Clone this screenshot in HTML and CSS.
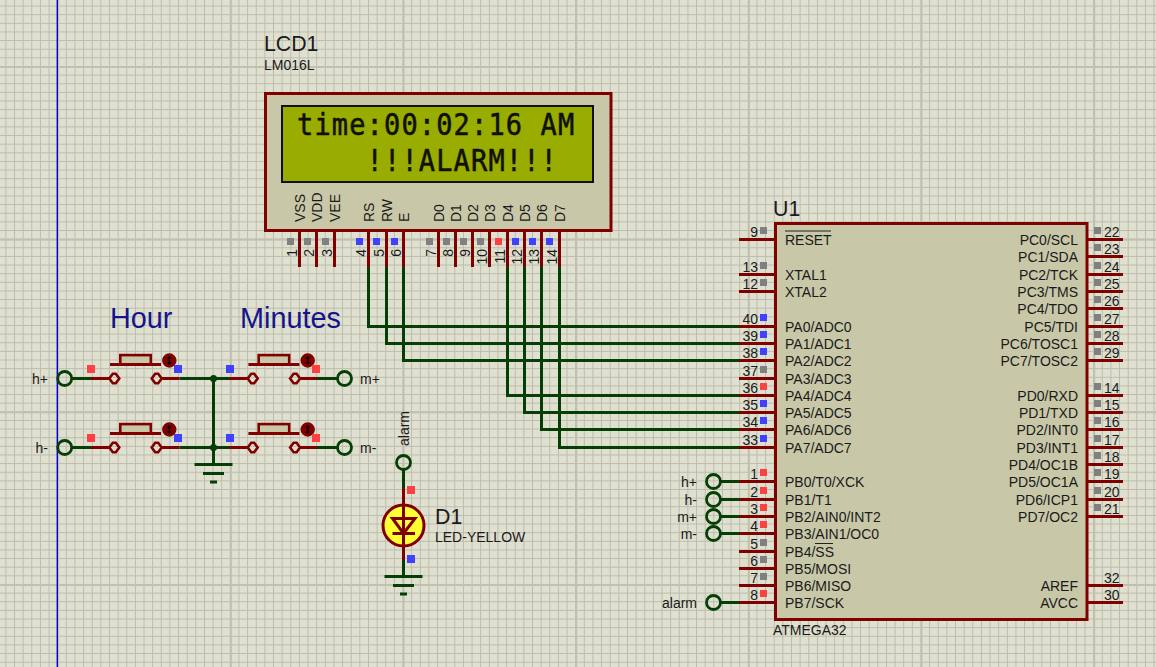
FILE: index.html
```html
<!DOCTYPE html>
<html lang="en">
<head>
<meta charset="utf-8">
<title>ATMEGA32 LCD alarm clock schematic</title>
<link rel="stylesheet" href="styles.css">
</head>
<body>
<svg class="sheet" width="1156" height="667" viewBox="0 0 1156 667" xmlns="http://www.w3.org/2000/svg">
  <defs>
    <pattern id="minor" patternUnits="userSpaceOnUse" x="57.2" y="66" width="8.633" height="8.633">
      <path class="grid-minor" d="M.5 0V8.633M0 .5H8.633"/>
    </pattern>
    <pattern id="major" patternUnits="userSpaceOnUse" x="57.2" y="66" width="172.67" height="172.67">
      <path class="grid-major" d="M1 0V172.67M0 1H172.67"/>
    </pattern>
    <g id="button">
      <path class="contact" d="M-5 0L-1.5-4.8H1.5L5 0L1.5 4.8H-1.5ZM37.4 0L40.9-4.8H43.9L47.4 0L43.9 4.8H40.9Z"/>
      <rect class="button-cap" x="6" y="-23.4" width="30.5" height="9.4"/>
      <path class="pin" d="M-4.3-14H46.7"/>
      <circle class="dial" cx="55" cy="-18" r="6.2"/>
      <path class="dial-mark" d="M55-21.5V-14.5M53.5-20L55-21.5L56.5-20M53.5-16L55-14.5L56.5-16"/>
    </g>
    <g id="earth">
      <path class="wire" d="M-19 0H19M-10.5 9H10.5M-3.5 17.5H3.5"/>
    </g>
  </defs>

  <rect width="1156" height="667" class="paper"/>
  <rect width="1156" height="667" fill="url(#minor)"/>
  <rect width="1156" height="667" fill="url(#major)"/>
  <path class="origin" d="M57.3 0V667"/>

  <!-- Wires -->
  <path class="wire" d="M368.5 267V326.5H739M386.5 267V343.5H739M403.5 267V360.5H739M507.5 267V395.5H739M524.5 267V412.5H739M541.5 267V429.5H739M559.5 267V447.5H739"/>
  <path class="wire" d="M72 378.5H91M179.5 378.5H229M317 378.5H337M72 447.5H91M179.5 447.5H229M317 447.5H337M213.5 378.5V464.5"/>
  <path class="wire" d="M721 481.5H739M721 499.5H739M721 516.5H739M721 533.5H739M721 602.5H739"/>
  <path class="wire" d="M403.5 470V488M403.5 560V576"/>
  <use href="#earth" x="213.5" y="464.5"/>
  <use href="#earth" x="403.5" y="576.5"/>
  <circle class="junction" cx="213.5" cy="378.5" r="3.5"/>
  <circle class="junction" cx="213.5" cy="447.5" r="3.5"/>

  <!-- Terminals -->
  <g class="terminal">
    <circle cx="64.7" cy="378.5" r="7"/><circle cx="64.7" cy="447.5" r="7"/>
    <circle cx="344.5" cy="378.5" r="7"/><circle cx="344.5" cy="447.5" r="7"/>
    <circle cx="403.5" cy="462.5" r="7"/>
    <circle cx="713.5" cy="481.5" r="7"/><circle cx="713.5" cy="499.5" r="7"/>
    <circle cx="713.5" cy="516.5" r="7"/><circle cx="713.5" cy="533.5" r="7"/>
    <circle cx="713.5" cy="602.5" r="7"/>
  </g>

  <!-- Push buttons -->
  <path class="pin" d="M91 378.5H109M162 378.5H179.5M229 378.5H247M300 378.5H317M91 447.5H109M162 447.5H179.5M229 447.5H247M300 447.5H317"/>
  <use href="#button" x="114.3" y="378.5"/>
  <use href="#button" x="252.7" y="378.5"/>
  <use href="#button" x="114.3" y="447.5"/>
  <use href="#button" x="252.7" y="447.5"/>

  <!-- LED -->
  <path class="pin" d="M403.5 488V505M403.5 545V560"/>
  <circle class="led" cx="403.5" cy="525.5" r="20.5"/>
  <path class="pin" d="M403.5 505V545M392.5 533.5H415M392.5 518.5H415L403.5 533.5Z"/>

  <!-- LCD -->
  <path class="pin" d="M299.5 231V267M316.5 231V267M334.5 231V267M368.5 231V267M386.5 231V267M403.5 231V267M438.5 231V267M455.5 231V267M472.5 231V267M489.5 231V267M507.5 231V267M524.5 231V267M541.5 231V267M559.5 231V267"/>
  <rect class="body" x="265.5" y="93.5" width="345.5" height="137"/>
  <rect class="screen" x="282" y="106" width="311" height="76"/>
  <text class="lcd-text" transform="translate(297 135) scale(1 1.12)">time:00:02:16 AM</text>
  <text class="lcd-text" transform="translate(366.6 170.5) scale(1 1.12)">!!!ALARM!!!</text>

  <!-- ATMEGA32 -->
  <path class="pin" d="M739 239.5H775M739 274.5H775M739 291.5H775M739 326.5H775M739 343.5H775M739 360.5H775M739 378.5H775M739 395.5H775M739 412.5H775M739 429.5H775M739 447.5H775M739 481.5H775M739 499.5H775M739 516.5H775M739 533.5H775M739 551.5H775M739 568.5H775M739 585.5H775M739 602.5H775"/>
  <path class="pin" d="M1087 239.5H1123M1087 256.5H1123M1087 274.5H1123M1087 291.5H1123M1087 308.5H1123M1087 326.5H1123M1087 343.5H1123M1087 360.5H1123M1087 395.5H1123M1087 412.5H1123M1087 429.5H1123M1087 447.5H1123M1087 464.5H1123M1087 481.5H1123M1087 499.5H1123M1087 516.5H1123M1087 585.5H1123M1087 602.5H1123"/>
  <rect class="body" x="775.5" y="223.5" width="311.5" height="396"/>
  <path class="bar" d="M785 231H831M815 543.5H833"/>

  <!-- Titles -->
  <text class="refdes" x="264" y="51">LCD1</text>
  <text class="value" x="264" y="70">LM016L</text>
  <text class="refdes" x="773" y="216">U1</text>
  <text class="value" x="773" y="635">ATMEGA32</text>
  <text class="refdes" x="435" y="523.5">D1</text>
  <text class="value" x="435" y="541.5">LED-YELLOW</text>
  <text class="note" x="110" y="328">Hour</text>
  <text class="note" x="240" y="328">Minutes</text>

  <!-- Net labels -->
  <g class="value">
    <text class="end" x="48" y="383.5">h+</text>
    <text class="end" x="48" y="452.5">h-</text>
    <text x="360" y="383.5">m+</text>
    <text x="360" y="452.5">m-</text>
    <text class="end" x="697" y="486.5">h+</text>
    <text class="end" x="697" y="504.5">h-</text>
    <text class="end" x="697" y="521.5">m+</text>
    <text class="end" x="697" y="538.5">m-</text>
    <text class="end" x="697" y="607.5">alarm</text>
    <text transform="translate(408.5 446) rotate(-90)">alarm</text>
  </g>

  <!-- LCD pin names -->
  <g class="value">
    <text transform="translate(304.5 222) rotate(-90)">VSS</text>
    <text transform="translate(321.5 222) rotate(-90)">VDD</text>
    <text transform="translate(339.5 222) rotate(-90)">VEE</text>
    <text transform="translate(373.5 222) rotate(-90)">RS</text>
    <text transform="translate(391.5 222) rotate(-90)">RW</text>
    <text transform="translate(408.5 222) rotate(-90)">E</text>
    <text transform="translate(443.5 222) rotate(-90)">D0</text>
    <text transform="translate(460.5 222) rotate(-90)">D1</text>
    <text transform="translate(477.5 222) rotate(-90)">D2</text>
    <text transform="translate(494.5 222) rotate(-90)">D3</text>
    <text transform="translate(512.5 222) rotate(-90)">D4</text>
    <text transform="translate(529.5 222) rotate(-90)">D5</text>
    <text transform="translate(546.5 222) rotate(-90)">D6</text>
    <text transform="translate(564.5 222) rotate(-90)">D7</text>
  </g>

  <!-- LCD pin numbers -->
  <g class="value end">
    <text transform="translate(296.5 249) rotate(-90)">1</text>
    <text transform="translate(313.5 249) rotate(-90)">2</text>
    <text transform="translate(331.5 249) rotate(-90)">3</text>
    <text transform="translate(365.5 249) rotate(-90)">4</text>
    <text transform="translate(383.5 249) rotate(-90)">5</text>
    <text transform="translate(400.5 249) rotate(-90)">6</text>
    <text transform="translate(435.5 249) rotate(-90)">7</text>
    <text transform="translate(452.5 249) rotate(-90)">8</text>
    <text transform="translate(469.5 249) rotate(-90)">9</text>
    <text transform="translate(486.5 249) rotate(-90)">10</text>
    <text transform="translate(504.5 249) rotate(-90)">11</text>
    <text transform="translate(521.5 249) rotate(-90)">12</text>
    <text transform="translate(538.5 249) rotate(-90)">13</text>
    <text transform="translate(556.5 249) rotate(-90)">14</text>
  </g>

  <!-- Chip left pin names -->
  <g class="value">
    <text x="785" y="245">RESET</text>
    <text x="785" y="280">XTAL1</text>
    <text x="785" y="297">XTAL2</text>
    <text x="785" y="332">PA0/ADC0</text>
    <text x="785" y="349">PA1/ADC1</text>
    <text x="785" y="366">PA2/ADC2</text>
    <text x="785" y="384">PA3/ADC3</text>
    <text x="785" y="401">PA4/ADC4</text>
    <text x="785" y="418">PA5/ADC5</text>
    <text x="785" y="435">PA6/ADC6</text>
    <text x="785" y="453">PA7/ADC7</text>
    <text x="785" y="487">PB0/T0/XCK</text>
    <text x="785" y="505">PB1/T1</text>
    <text x="785" y="522">PB2/AIN0/INT2</text>
    <text x="785" y="539">PB3/AIN1/OC0</text>
    <text x="785" y="557">PB4/SS</text>
    <text x="785" y="574">PB5/MOSI</text>
    <text x="785" y="591">PB6/MISO</text>
    <text x="785" y="608">PB7/SCK</text>
  </g>

  <!-- Chip right pin names -->
  <g class="value end">
    <text x="1078" y="245">PC0/SCL</text>
    <text x="1078" y="262">PC1/SDA</text>
    <text x="1078" y="280">PC2/TCK</text>
    <text x="1078" y="297">PC3/TMS</text>
    <text x="1078" y="314">PC4/TDO</text>
    <text x="1078" y="332">PC5/TDI</text>
    <text x="1078" y="349">PC6/TOSC1</text>
    <text x="1078" y="366">PC7/TOSC2</text>
    <text x="1078" y="401">PD0/RXD</text>
    <text x="1078" y="418">PD1/TXD</text>
    <text x="1078" y="435">PD2/INT0</text>
    <text x="1078" y="453">PD3/INT1</text>
    <text x="1078" y="470">PD4/OC1B</text>
    <text x="1078" y="487">PD5/OC1A</text>
    <text x="1078" y="505">PD6/ICP1</text>
    <text x="1078" y="522">PD7/OC2</text>
    <text x="1078" y="591">AREF</text>
    <text x="1078" y="608">AVCC</text>
  </g>

  <!-- Chip pin numbers -->
  <g class="value end">
    <text x="758" y="236.5">9</text>
    <text x="758" y="271.5">13</text>
    <text x="758" y="288.5">12</text>
    <text x="758" y="323.5">40</text>
    <text x="758" y="340.5">39</text>
    <text x="758" y="357.5">38</text>
    <text x="758" y="375.5">37</text>
    <text x="758" y="392.5">36</text>
    <text x="758" y="409.5">35</text>
    <text x="758" y="426.5">34</text>
    <text x="758" y="444.5">33</text>
    <text x="758" y="478.5">1</text>
    <text x="758" y="496.5">2</text>
    <text x="758" y="513.5">3</text>
    <text x="758" y="530.5">4</text>
    <text x="758" y="548.5">5</text>
    <text x="758" y="565.5">6</text>
    <text x="758" y="582.5">7</text>
    <text x="758" y="599.5">8</text>
  </g>
  <g class="value">
    <text x="1104" y="236.5">22</text>
    <text x="1104" y="253.5">23</text>
    <text x="1104" y="271.5">24</text>
    <text x="1104" y="288.5">25</text>
    <text x="1104" y="305.5">26</text>
    <text x="1104" y="323.5">27</text>
    <text x="1104" y="340.5">28</text>
    <text x="1104" y="357.5">29</text>
    <text x="1104" y="392.5">14</text>
    <text x="1104" y="409.5">15</text>
    <text x="1104" y="426.5">16</text>
    <text x="1104" y="444.5">17</text>
    <text x="1104" y="461.5">18</text>
    <text x="1104" y="478.5">19</text>
    <text x="1104" y="496.5">20</text>
    <text x="1104" y="513.5">21</text>
    <text x="1104" y="582.5">32</text>
    <text x="1104" y="599.5">30</text>
  </g>

  <!-- Logic probes -->
  <g class="pad-gray">
    <rect x="287" y="238" width="7" height="7"/><rect x="304" y="238" width="7" height="7"/><rect x="322" y="238" width="7" height="7"/>
    <rect x="426" y="238" width="7" height="7"/><rect x="443" y="238" width="7" height="7"/><rect x="460" y="238" width="7" height="7"/><rect x="477" y="238" width="7" height="7"/>
    <rect x="760" y="227" width="7" height="7"/><rect x="760" y="262" width="7" height="7"/><rect x="760" y="279" width="7" height="7"/><rect x="760" y="366" width="7" height="7"/>
    <rect x="760" y="539" width="7" height="7"/><rect x="760" y="556" width="7" height="7"/><rect x="760" y="573" width="7" height="7"/>
    <rect x="1094" y="227" width="7" height="7"/><rect x="1094" y="244" width="7" height="7"/><rect x="1094" y="262" width="7" height="7"/><rect x="1094" y="279" width="7" height="7"/><rect x="1094" y="296" width="7" height="7"/><rect x="1094" y="314" width="7" height="7"/><rect x="1094" y="331" width="7" height="7"/><rect x="1094" y="348" width="7" height="7"/>
    <rect x="1094" y="383" width="7" height="7"/><rect x="1094" y="400" width="7" height="7"/><rect x="1094" y="417" width="7" height="7"/><rect x="1094" y="435" width="7" height="7"/><rect x="1094" y="452" width="7" height="7"/><rect x="1094" y="469" width="7" height="7"/><rect x="1094" y="487" width="7" height="7"/><rect x="1094" y="504" width="7" height="7"/>
  </g>
  <g class="pad-blue">
    <rect x="356" y="238" width="7" height="7"/><rect x="373" y="238" width="7" height="7"/><rect x="391" y="238" width="7" height="7"/>
    <rect x="512" y="238" width="7" height="7"/><rect x="529" y="238" width="7" height="7"/><rect x="546" y="238" width="7" height="7"/>
    <rect x="760" y="314" width="7" height="7"/><rect x="760" y="331" width="7" height="7"/><rect x="760" y="348" width="7" height="7"/>
    <rect x="760" y="400" width="7" height="7"/><rect x="760" y="417" width="7" height="7"/><rect x="760" y="435" width="7" height="7"/>
    <rect x="174" y="365" width="8" height="8"/><rect x="226" y="365" width="8" height="8"/>
    <rect x="174" y="434" width="8" height="8"/><rect x="226" y="434" width="8" height="8"/>
    <rect x="407" y="555" width="8" height="8"/>
  </g>
  <g class="pad-red">
    <rect x="495" y="238" width="7" height="7"/>
    <rect x="760" y="383" width="7" height="7"/>
    <rect x="760" y="469" width="7" height="7"/><rect x="760" y="487" width="7" height="7"/><rect x="760" y="504" width="7" height="7"/><rect x="760" y="521" width="7" height="7"/><rect x="760" y="590" width="7" height="7"/>
    <rect x="87" y="365" width="8" height="8"/><rect x="312" y="365" width="8" height="8"/>
    <rect x="87" y="434" width="8" height="8"/><rect x="312" y="434" width="8" height="8"/>
    <rect x="407" y="486" width="8" height="8"/>
  </g>
</svg>
</body>
</html>
```
FILE: styles.css
```css
html, body {
  margin: 0;
  padding: 0;
  overflow: hidden;
  background: #e0e0d0;
}

.sheet {
  display: block;
}

.paper { fill: #e0e0d0; }
.grid-minor { stroke: #bcbcac; stroke-width: 1; fill: none; shape-rendering: crispEdges; }
.grid-major { stroke: #c0c0b0; stroke-width: 2; fill: none; shape-rendering: crispEdges; }
.origin { stroke: #0000e0; stroke-width: 1.4; fill: none; }

.wire { stroke: #063f06; stroke-width: 3; fill: none; }
.pin { stroke: #800000; stroke-width: 3; fill: none; }
.junction { fill: #063f06; }
.terminal circle { stroke: #063f06; stroke-width: 2.8; fill: none; }

.contact { stroke: #800000; stroke-width: 2.6; fill: none; }
.button-cap { stroke: #800000; stroke-width: 2.6; fill: #c8c8a8; }
.dial { fill: #800000; stroke: #800000; stroke-width: 2; }
.dial-mark { stroke: #000000; stroke-width: 1.4; fill: none; }
.led { fill: #ffff33; stroke: #800000; stroke-width: 3; }

.body { fill: #c8c8a8; stroke: #800000; stroke-width: 3; }
.screen { fill: #99ac00; stroke: #101010; stroke-width: 2; }
.bar { stroke: #202020; stroke-width: 1.2; fill: none; }

text {
  font-family: "Liberation Sans", Arial, sans-serif;
  fill: #1a1a1a;
}
.lcd-text {
  font-family: "DejaVu Sans Mono", monospace;
  font-size: 27px;
  letter-spacing: 1.15px;
  fill: #101000;
  stroke: #101000;
  stroke-width: 0.5px;
}
.refdes { font-size: 21.3px; }
.value { font-size: 14px; }
.end { text-anchor: end; }
.note { font-size: 28.8px; fill: #14148c; }

.pad-gray rect { fill: #808080; }
.pad-blue rect { fill: #4040ff; }
.pad-red rect { fill: #ff4040; }
```
